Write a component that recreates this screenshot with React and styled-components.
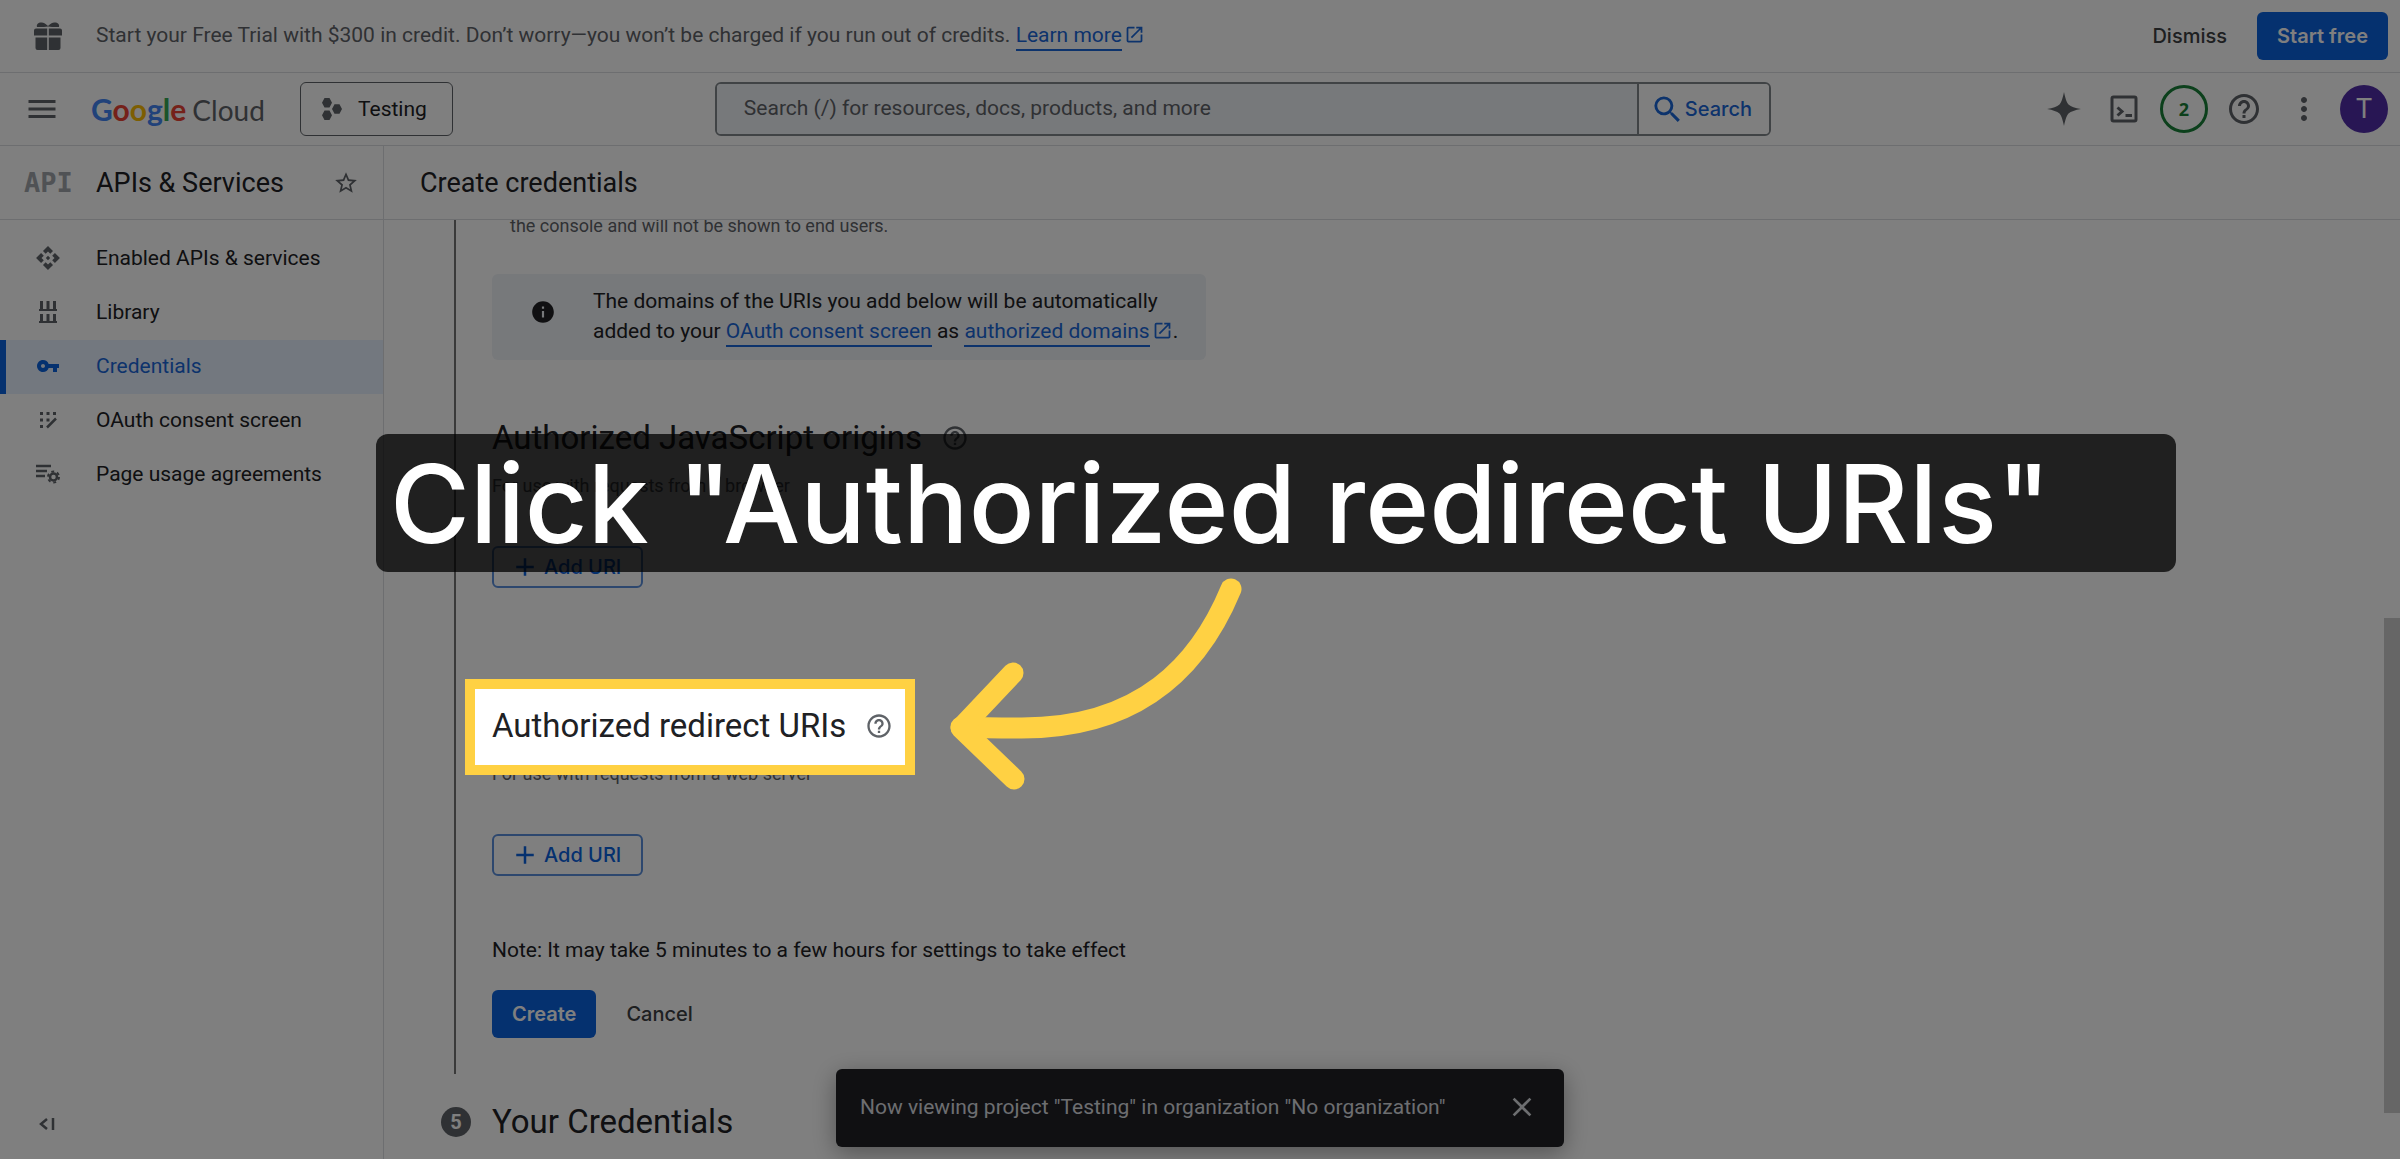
import React from "react";
import styled, { createGlobalStyle, css } from "styled-components";
import {
  MdAdd,
  MdApi,
  MdClose,
  MdHelpOutline,
  MdInfo,
  MdMenu,
  MdMoreVert,
  MdOpenInNew,
  MdSearch,
  MdStarBorder,
  MdVpnKey,
} from "react-icons/md";

const color = {
  text: "#202124",
  muted: "#5f6368",
  line: "#dadce0",
  outline: "#80868b",
  blue: "#1a67d8",
  fill: "#0b62de",
  tint: "#eff2f6",
  selected: "#e6f0fe",
  highlight: "#ffd143",
};

const GlobalStyle = createGlobalStyle`
  *, *::before, *::after { box-sizing: border-box; }
  body {
    margin: 0;
    overflow: hidden;
    color: ${color.text};
    background: #fff;
    font: 400 21px/30px Roboto, "Liberation Sans", sans-serif;
  }
  h1, h2, p, ul { margin: 0; padding: 0; font-weight: 400; }
  svg { display: block; flex: none; }
`;

const Page = styled.div`
  position: relative;
  display: flex;
  flex-direction: column;
  height: 100vh;
  overflow: hidden;
`;

const Bar = styled.div`
  display: flex;
  align-items: center;
  flex: none;
  height: 73px;
  padding-right: 12px;
  border-bottom: 1px solid ${color.line};
`;

const IconSlot = styled.span`
  display: flex;
  justify-content: center;
  flex: none;
  width: 96px;
  color: ${(p) => (p.$active ? color.fill : color.muted)};
`;

const BannerText = styled.p`
  flex: 1;
  padding-bottom: 2px;
  color: ${color.muted};
`;

const Link = styled.a`
  padding-bottom: 2px;
  color: ${color.blue};
  text-decoration: none;
  border-bottom: 2px solid currentColor;
`;

const ExternalIcon = styled(MdOpenInNew)`
  display: inline-block;
  margin-left: 2px;
  color: ${color.blue};
  vertical-align: -3px;
`;

const Button = styled.button`
  display: inline-flex;
  align-items: center;
  height: 48px;
  padding: 0;
  border: 0;
  border-radius: 6px;
  background: none;
  color: #3c4043;
  font: 500 20px/30px Inter, Roboto, sans-serif;

  ${(p) =>
    p.$kind === "filled" &&
    css`
      padding: 0 20px;
      background: ${color.fill};
      color: #fff;
      font-weight: 600;
    `}
  ${(p) =>
    p.$kind === "outlined" &&
    css`
      height: 42px;
      padding: 0 20px 0 16px;
      gap: 4px;
      border: 2px solid #5a8fdc;
      color: ${color.fill};
    `}
`;

const ButtonPair = styled.div`
  display: flex;
  gap: 30px;
  margin-top: ${(p) => p.$top || 0}px;
`;

const MenuButton = styled.button`
  display: flex;
  padding: 0;
  margin: 0 28px 0 24px;
  border: 0;
  background: none;
  color: ${color.muted};
`;

const Logo = styled.a`
  display: flex;
  align-items: baseline;
  flex: none;
  gap: 6px;
  width: 212px;
  padding-left: 3px;
  color: ${color.muted};
  font: 400 28px/36px Lato, sans-serif;
  text-decoration: none;

  b { font-size: 30px; }
`;

const Letter = styled.span`
  color: ${(p) => p.$c};
`;

const ProjectButton = styled.button`
  display: flex;
  align-items: center;
  gap: 16px;
  height: 54px;
  padding: 0 25px 0 21px;
  border: 1px solid ${color.muted};
  border-radius: 6px;
  background: none;
  color: ${color.text};
  font: inherit;
`;

const SearchForm = styled.form`
  display: flex;
  width: 44vw;
  height: 54px;
  margin: 0 auto 0 262px;
  border: 2px solid ${color.outline};
  border-radius: 6px;
  overflow: hidden;
`;

const SearchInput = styled.input`
  flex: 1;
  min-width: 0;
  padding: 0 27px 2px;
  border: 0;
  background: ${color.tint};
  color: ${color.text};
  font: inherit;

  &::placeholder { color: ${color.muted}; opacity: 1; }
`;

const SearchButton = styled.button`
  display: flex;
  align-items: center;
  width: 132px;
  padding: 0 0 0 11px;
  border: 0;
  border-left: 2px solid ${color.outline};
  background: #fff;
  color: ${color.blue};
  font: 500 20px/30px Inter, Roboto, sans-serif;
`;

const Tools = styled.div`
  display: flex;
  gap: 12px;
`;

const Tool = styled.button`
  display: flex;
  align-items: center;
  justify-content: center;
  width: 48px;
  height: 48px;
  padding: 0;
  border: 0;
  border-radius: 50%;
  background: ${(p) => (p.$avatar ? "#512da8" : "none")};
  color: ${(p) => (p.$avatar ? "#fff" : color.muted)};
  font: 400 27px/30px Roboto, sans-serif;

  ${(p) =>
    p.$ring &&
    css`
      border: 3px solid #188038;
      color: #188038;
      font: 700 18px/24px "Open Sans", sans-serif;
    `}
`;

const Body = styled.div`
  display: grid;
  grid-template-columns: 384px minmax(0, 1fr);
  flex: 1;
  min-height: 0;
`;

const Sidebar = styled.aside`
  display: flex;
  flex-direction: column;
  border-right: 1px solid ${color.line};
`;

const TitleBar = styled.div`
  display: flex;
  align-items: center;
  flex: none;
  height: 74px;
  padding: 0 24px ${(p) => (p.$main ? "0 36px" : "0 0")};
  border-bottom: 1px solid ${color.line};
`;

const ApiMark = styled.span`
  width: 96px;
  padding-left: 24px;
  color: #a0a5aa;
  font: 700 27px/30px "DejaVu Sans Mono", monospace;
`;

const Title = styled.h1`
  flex: 1;
  font-size: 27px;
  line-height: 36px;
`;

const StarButton = styled.button`
  padding: 0;
  border: 0;
  background: none;
  color: ${color.muted};
`;

const NavList = styled.ul`
  flex: 1;
  padding-top: 12px;
  list-style: none;
`;

const NavLink = styled.a`
  display: flex;
  align-items: center;
  height: 54px;
  padding-bottom: 2px;
  color: ${(p) => (p.$active ? color.blue : color.text)};
  background: ${(p) => (p.$active ? color.selected : "none")};
  box-shadow: ${(p) => (p.$active ? `inset 6px 0 ${color.fill}` : "none")};
  text-decoration: none;
`;

const CollapseButton = styled.button`
  align-self: flex-start;
  padding: 0;
  margin: 0 0 26px 36px;
  border: 0;
  background: none;
  color: ${color.muted};
`;

const Main = styled.main`
  display: flex;
  flex-direction: column;
  min-width: 0;
  min-height: 0;
`;

const ScrollArea = styled.div`
  display: flex;
  flex: 1;
  min-height: 0;
  overflow: hidden;
`;

const Steps = styled.div`
  flex: 1;
  margin-top: -6px;
  padding-left: 57px;
`;

const StepBody = styled.section`
  margin-left: 13px;
  padding: 0 0 36px 36px;
  border-left: 2px solid #757575;
`;

const Hint = styled.p`
  margin-top: ${(p) => (p.$field ? 0 : 14)}px;
  padding-left: ${(p) => (p.$field ? 18 : 0)}px;
  color: ${color.muted};
  font-size: 18px;
  line-height: 24px;
`;

const InfoBox = styled.div`
  display: flex;
  align-items: flex-start;
  width: 714px;
  margin-top: 36px;
  padding: 12px 24px 14px 38px;
  gap: 37px;
  border-radius: 6px;
  background: ${color.tint};

  > svg { margin-top: 13px; }
`;

const SectionTitle = styled.h2`
  display: flex;
  align-items: center;
  gap: 19px;
  margin-top: ${(p) => p.$top || 0}px;
  font-size: 33px;
  line-height: 44px;

  svg { color: ${color.muted}; }
`;

const AddRow = styled.div`
  display: flex;
  margin-top: 48px;
`;

const Note = styled.p`
  margin-top: 59px;
`;

const StepHead = styled.div`
  display: flex;
  align-items: center;
  gap: 21px;
  margin-top: 26px;
`;

const StepNumber = styled.span`
  display: flex;
  align-items: center;
  justify-content: center;
  width: 30px;
  height: 30px;
  border-radius: 50%;
  background: ${color.muted};
  color: #fff;
  font: 700 20px/30px Roboto, sans-serif;
`;

const ScrollTrack = styled.div`
  width: 16px;
  padding-top: 398px;
`;

const ScrollThumb = styled.div`
  height: 495px;
  background: #cdcdcd;
`;

const Snackbar = styled.div`
  position: absolute;
  right: 0;
  bottom: 12px;
  left: 0;
  display: flex;
  align-items: center;
  justify-content: space-between;
  width: 728px;
  height: 78px;
  margin: 0 auto;
  padding: 0 26px 2px 24px;
  border-radius: 6px;
  background: #202124;
  box-shadow: 0 6px 24px rgba(0, 0, 0, 0.35);
  color: #dadce0;
`;

const DismissButton = styled.button`
  padding: 0;
  border: 0;
  background: none;
  color: inherit;
`;

const Spotlight = styled.div`
  position: absolute;
  top: 679px;
  left: 465px;
  width: 450px;
  height: 96px;
  border: 10px solid ${color.highlight};
  box-shadow: 0 0 0 3000px rgba(0, 0, 0, 0.5);
  pointer-events: none;
`;

const Callout = styled.div`
  position: absolute;
  top: 434px;
  left: 376px;
  width: 75%;
  padding: 2px 14px;
  border-radius: 12px;
  background: rgba(0, 0, 0, 0.75);
  color: #fff;
  font: 500 109px/134px Inter, sans-serif;
  white-space: nowrap;
`;

const Arrow = styled.svg`
  position: absolute;
  top: 570px;
  left: 940px;
`;

const GiftIcon = () => (
  <svg width="28" height="28" viewBox="0 0 28 28" fill="currentColor" aria-hidden="true">
    <path d="M3 5C2 2 5 0 8 0.500 11 1 12.500 2.500 14 4 15.500 2.500 17 1 20 .5 23 0 26 2 25 5H18L14 4.500 10 5z" />
    <path d="M2 6.500h11.200v7H0v-5a2 2 0 0 1 2-2zM14.800 6.500H26a2 2 0 0 1 2 2v5H14.800z" />
    <path d="M1.500 15.500h11.700V28H3.500a2 2 0 0 1-2-2zM14.800 15.500h11.700V26a2 2 0 0 1-2 2h-9.700z" />
  </svg>
);

const HexIcon = () => (
  <svg width="20" height="22" viewBox="0 0 20 22" fill="currentColor" color={color.muted} aria-hidden="true">
    <path d="M2.500 0h5L10 4.700 7.500 9.400h-5L0 4.700zM12.500 6.300h5L20 11l-2.500 4.700h-5L10 11zM2.500 12.600h5l2.500 4.700L7.500 22h-5L0 17.300z" />
  </svg>
);

const SparkIcon = () => (
  <svg width="34" height="34" viewBox="0 0 34 34" fill="currentColor" aria-hidden="true">
    <path d="M17 0C18.500 7 19.500 10 21.500 12.500 24 14.500 28 16 34 17 28 18 24 19.500 21.500 21.500 19.500 24 18.500 27 17 34 15.500 27 14.500 24 12.500 21.500 10 19.500 6 18 0 17 6 16 10 14.500 12.500 12.500 14.500 10 15.500 7 17 0z" />
  </svg>
);

const TerminalIcon = () => (
  <svg width="28" height="28" viewBox="0 0 28 28" fill="none" stroke="currentColor" strokeWidth="3" aria-hidden="true">
    <rect x="2" y="2" width="24" height="24" rx="1.500" />
    <path d="M7.500 12.500l4.500 4-4.500 4M15.500 20.500h6.500" />
  </svg>
);

const LibraryIcon = () => (
  <svg width="20" height="24" viewBox="0 0 20 24" fill="none" stroke="currentColor" strokeWidth="3" aria-hidden="true">
    <path d="M3.500 1v9M10 1v9M16.500 1v9M3.500 14v8M10 14v8M16.500 14v8" />
    <path d="M1 10h18M1 22h18" strokeWidth="2" />
  </svg>
);

const ConsentIcon = () => (
  <svg width="18" height="18" viewBox="0 0 18 18" fill="currentColor" aria-hidden="true">
    <path d="M1 1h3v3H1zM7.500 1h3v3h-3zM14 1h3v3h-3zM1 7.500h3v3H1zM7.500 7.500h3v3h-3zM1 14h3v3H1z" />
    <path d="M8 16.500L17 7.500" stroke="currentColor" strokeWidth="2.500" />
  </svg>
);

const AgreementIcon = () => (
  <svg width="24" height="20" viewBox="0 0 24 20" fill="none" stroke="currentColor" aria-hidden="true">
    <path d="M0 2h15M0 7h11M0 12h9" strokeWidth="2.500" />
    <circle cx="17.500" cy="13" r="3.500" strokeWidth="2.500" />
    <circle cx="17.500" cy="13" r="5.500" strokeWidth="2" strokeDasharray="2.900 2.860" />
  </svg>
);

const CollapseIcon = () => (
  <svg width="22" height="18" viewBox="0 0 22 18" fill="none" stroke="currentColor" strokeWidth="2.500" aria-hidden="true">
    <path d="M11 4L5 9l6 5M17 3v12" />
  </svg>
);

const googleLetters = [
  ["G", "#4285f4"],
  ["o", "#ea4335"],
  ["o", "#fbbc04"],
  ["g", "#4285f4"],
  ["l", "#34a853"],
  ["e", "#ea4335"],
];

const navItems = [
  { label: "Enabled APIs & services", icon: <MdApi size={26} /> },
  { label: "Library", icon: <LibraryIcon /> },
  { label: "Credentials", icon: <MdVpnKey size={24} />, active: true },
  { label: "OAuth consent screen", icon: <ConsentIcon /> },
  { label: "Page usage agreements", icon: <AgreementIcon /> },
];

function UriSection({ title, hint, top }) {
  return (
    <>
      <SectionTitle $top={top}>
        {title}
        <MdHelpOutline size={28} />
      </SectionTitle>
      <Hint>{hint}</Hint>
      <AddRow>
        <Button $kind="outlined" type="button">
          <MdAdd size={30} />
          Add URI
        </Button>
      </AddRow>
    </>
  );
}

export default function App() {
  return (
    <Page>
      <GlobalStyle />
      <Bar>
        <IconSlot><GiftIcon /></IconSlot>
        <BannerText>
          Start your Free Trial with $300 in credit. Don’t worry—you won’t be charged if you run out of credits.{" "}
          <Link href="#learn">Learn more</Link>
          <ExternalIcon size={21} />
        </BannerText>
        <ButtonPair>
          <Button type="button">Dismiss</Button>
          <Button type="button" $kind="filled">Start free</Button>
        </ButtonPair>
      </Bar>

      <Bar as="header">
        <MenuButton type="button" aria-label="Navigation menu"><MdMenu size={36} /></MenuButton>
        <Logo href="#home">
          <b>
            {googleLetters.map(([ch, c], i) => (
              <Letter key={i} $c={c}>{ch}</Letter>
            ))}
          </b>
          <span>Cloud</span>
        </Logo>
        <ProjectButton type="button">
          <HexIcon />
          Testing
        </ProjectButton>
        <SearchForm role="search">
          <SearchInput
            type="text"
            aria-label="Search"
            placeholder="Search (/) for resources, docs, products, and more"
          />
          <SearchButton type="button">
            <MdSearch size={35} />
            Search
          </SearchButton>
        </SearchForm>
        <Tools>
          <Tool type="button" aria-label="Assistant"><SparkIcon /></Tool>
          <Tool type="button" aria-label="Cloud Shell"><TerminalIcon /></Tool>
          <Tool type="button" $ring>2</Tool>
          <Tool type="button" aria-label="Help"><MdHelpOutline size={36} /></Tool>
          <Tool type="button" aria-label="More options"><MdMoreVert size={36} /></Tool>
          <Tool type="button" $avatar>T</Tool>
        </Tools>
      </Bar>

      <Body>
        <Sidebar>
          <TitleBar>
            <ApiMark>API</ApiMark>
            <Title as="h2">APIs &amp; Services</Title>
            <StarButton type="button" aria-label="Pin"><MdStarBorder size={26} /></StarButton>
          </TitleBar>
          <NavList>
            {navItems.map((item) => (
              <li key={item.label}>
                <NavLink href="#nav" $active={item.active}>
                  <IconSlot $active={item.active}>{item.icon}</IconSlot>
                  {item.label}
                </NavLink>
              </li>
            ))}
          </NavList>
          <CollapseButton type="button" aria-label="Collapse menu"><CollapseIcon /></CollapseButton>
        </Sidebar>

        <Main>
          <TitleBar $main>
            <Title>Create credentials</Title>
          </TitleBar>
          <ScrollArea>
            <Steps>
              <StepBody>
                <Hint $field>the console and will not be shown to end users.</Hint>
                <InfoBox>
                  <MdInfo size={26} />
                  <p>
                    The domains of the URIs you add below will be automatically
                    <br />
                    added to your <Link href="#consent">OAuth consent screen</Link> as{" "}
                    <Link href="#domains">authorized domains</Link>
                    <ExternalIcon size={21} />.
                  </p>
                </InfoBox>
                <UriSection
                  top={56}
                  title="Authorized JavaScript origins"
                  hint="For use with requests from a browser"
                />
                <UriSection
                  top={116}
                  title="Authorized redirect URIs"
                  hint="For use with requests from a web server"
                />
                <Note>Note: It may take 5 minutes to a few hours for settings to take effect</Note>
                <ButtonPair $top={25}>
                  <Button type="button" $kind="filled">Create</Button>
                  <Button type="button">Cancel</Button>
                </ButtonPair>
              </StepBody>
              <StepHead>
                <StepNumber>5</StepNumber>
                <SectionTitle>Your Credentials</SectionTitle>
              </StepHead>
            </Steps>
            <ScrollTrack>
              <ScrollThumb />
            </ScrollTrack>
          </ScrollArea>
        </Main>
      </Body>

      <Snackbar role="status">
        <span>Now viewing project "Testing" in organization "No organization"</span>
        <DismissButton type="button" aria-label="Close"><MdClose size={32} /></DismissButton>
      </Snackbar>

      <Spotlight />
      <Callout>Click "Authorized redirect URIs"</Callout>
      <Arrow
        width="320"
        height="230"
        viewBox="940 570 320 230"
        fill="none"
        stroke={color.highlight}
        strokeWidth="21"
        strokeLinecap="round"
        strokeLinejoin="round"
        aria-hidden="true"
      >
        <path d="M1231 589C1200 664 1142 728 1022 728Q985 728 961 727" />
        <path d="M1013 673L961 728l53 51" />
      </Arrow>
    </Page>
  );
}
